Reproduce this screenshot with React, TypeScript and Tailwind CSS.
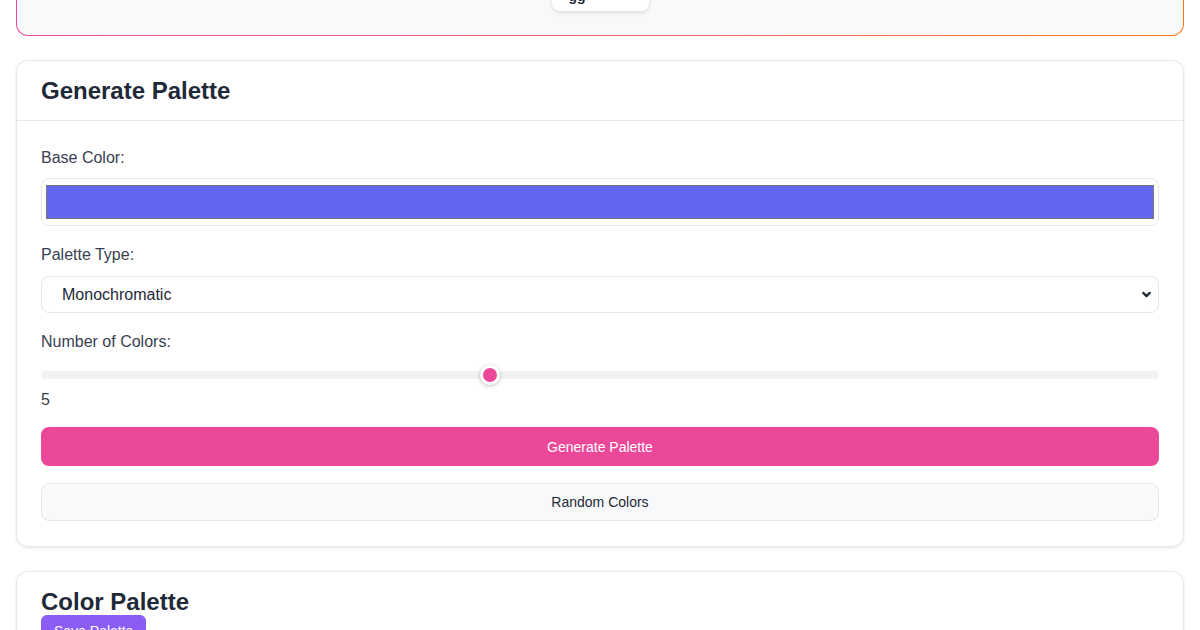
import { ChevronDown } from "lucide-react"

export default function App() {
  const count = 5
  const min = 3
  const max = 8
  const pct = (count - min) / (max - min)

  return (
    <div className="min-h-screen bg-white font-['Liberation_Sans',Arial,sans-serif] text-[#1f2937]">
      <div className="px-4 pt-4 pb-10 flex flex-col gap-6">
        {/* Header card (scrolled mostly out of view) */}
        <div className="-mt-[70px] rounded-xl p-px bg-linear-to-r from-[#ec4899] to-[#f97316]">
          <div className="rounded-[11px] bg-[#f8f9fa] px-6 pt-6 pb-6 flex flex-col items-center">
            <button className="h-10 w-[97px] rounded-lg bg-white shadow-[0_2px_4px_rgba(0,0,0,0.12)] text-sm font-bold text-[#1f2937] flex items-end justify-start pl-[17px] pb-2">
              <span className="leading-none">gg</span>
            </button>
          </div>
        </div>

        {/* Generate Palette */}
        <div className="rounded-xl border border-[#e5e7eb] bg-white shadow-[0_1px_3px_rgba(0,0,0,0.1)]">
          <div className="px-6 pt-4 pb-[15px] border-b border-[#e5e7eb]">
            <h2 className="text-2xl leading-7 font-bold text-[#1f2937]">Generate Palette</h2>
          </div>
          <div className="px-6 pt-[25px] pb-[25px] flex flex-col">
            <label className="text-base leading-6 text-[#374151] mb-2">Base Color:</label>
            <div className="h-12 rounded-lg border border-[#e5e7eb] bg-white px-1 py-[6px]">
              <div className="h-full border border-[#767676] bg-[#6366f1]" />
            </div>

            <label className="text-base leading-6 text-[#374151] mt-[17px] mb-[9px]">Palette Type:</label>
            <div className="h-[37px] rounded-lg border border-[#e5e7eb] bg-white pl-5 pr-[5px] flex items-center justify-between">
              <span className="text-base text-[#1f2937]">Monochromatic</span>
              <ChevronDown className="h-[13px] w-[13px] text-[#1f2937]" strokeWidth={4} />
            </div>

            <label className="text-base leading-6 text-[#374151] mt-[17px]">Number of Colors:</label>
            <div className="relative mt-[11px] h-5 flex items-center">
              <div className="h-2 w-full rounded-full bg-[#f1f2f4]" />
              <div
                className="absolute top-0 h-5 w-5 rounded-full bg-[#ec4899] border-[3px] border-white shadow-[0_1px_4px_rgba(0,0,0,0.25)]"
                style={{ left: `calc(${pct * 100}% - ${pct * 20}px)` }}
              />
            </div>
            <span className="mt-[3px] text-base leading-6 text-[#374151]">{count}</span>

            <button className="mt-[15px] h-[39px] w-full rounded-lg bg-[#ec4899] text-sm text-white">
              Generate Palette
            </button>
            <button className="mt-[17px] h-[38px] w-full rounded-lg border border-[#e5e7eb] bg-[#f8f9fa] text-sm text-[#1f2937]">
              Random Colors
            </button>
          </div>
        </div>

        {/* Color Palette */}
        <div className="rounded-xl border border-[#e5e7eb] bg-white shadow-[0_1px_3px_rgba(0,0,0,0.1)] px-6 pt-4 pb-6">
          <h2 className="text-2xl leading-7 font-bold text-[#1f2937]">Color Palette</h2>
          <button className="-mt-px h-8 px-[13px] rounded-md bg-[#8b5cf6] text-sm text-white">Save Palette</button>
          <div className="mt-4 grid grid-cols-5 gap-4">
            {["#312e81", "#4338ca", "#6366f1", "#a5b4fc", "#e0e7ff"].map((c) => (
              <div key={c} className="h-32 rounded-lg" style={{ backgroundColor: c }} />
            ))}
          </div>
        </div>
      </div>
    </div>
  )
}
